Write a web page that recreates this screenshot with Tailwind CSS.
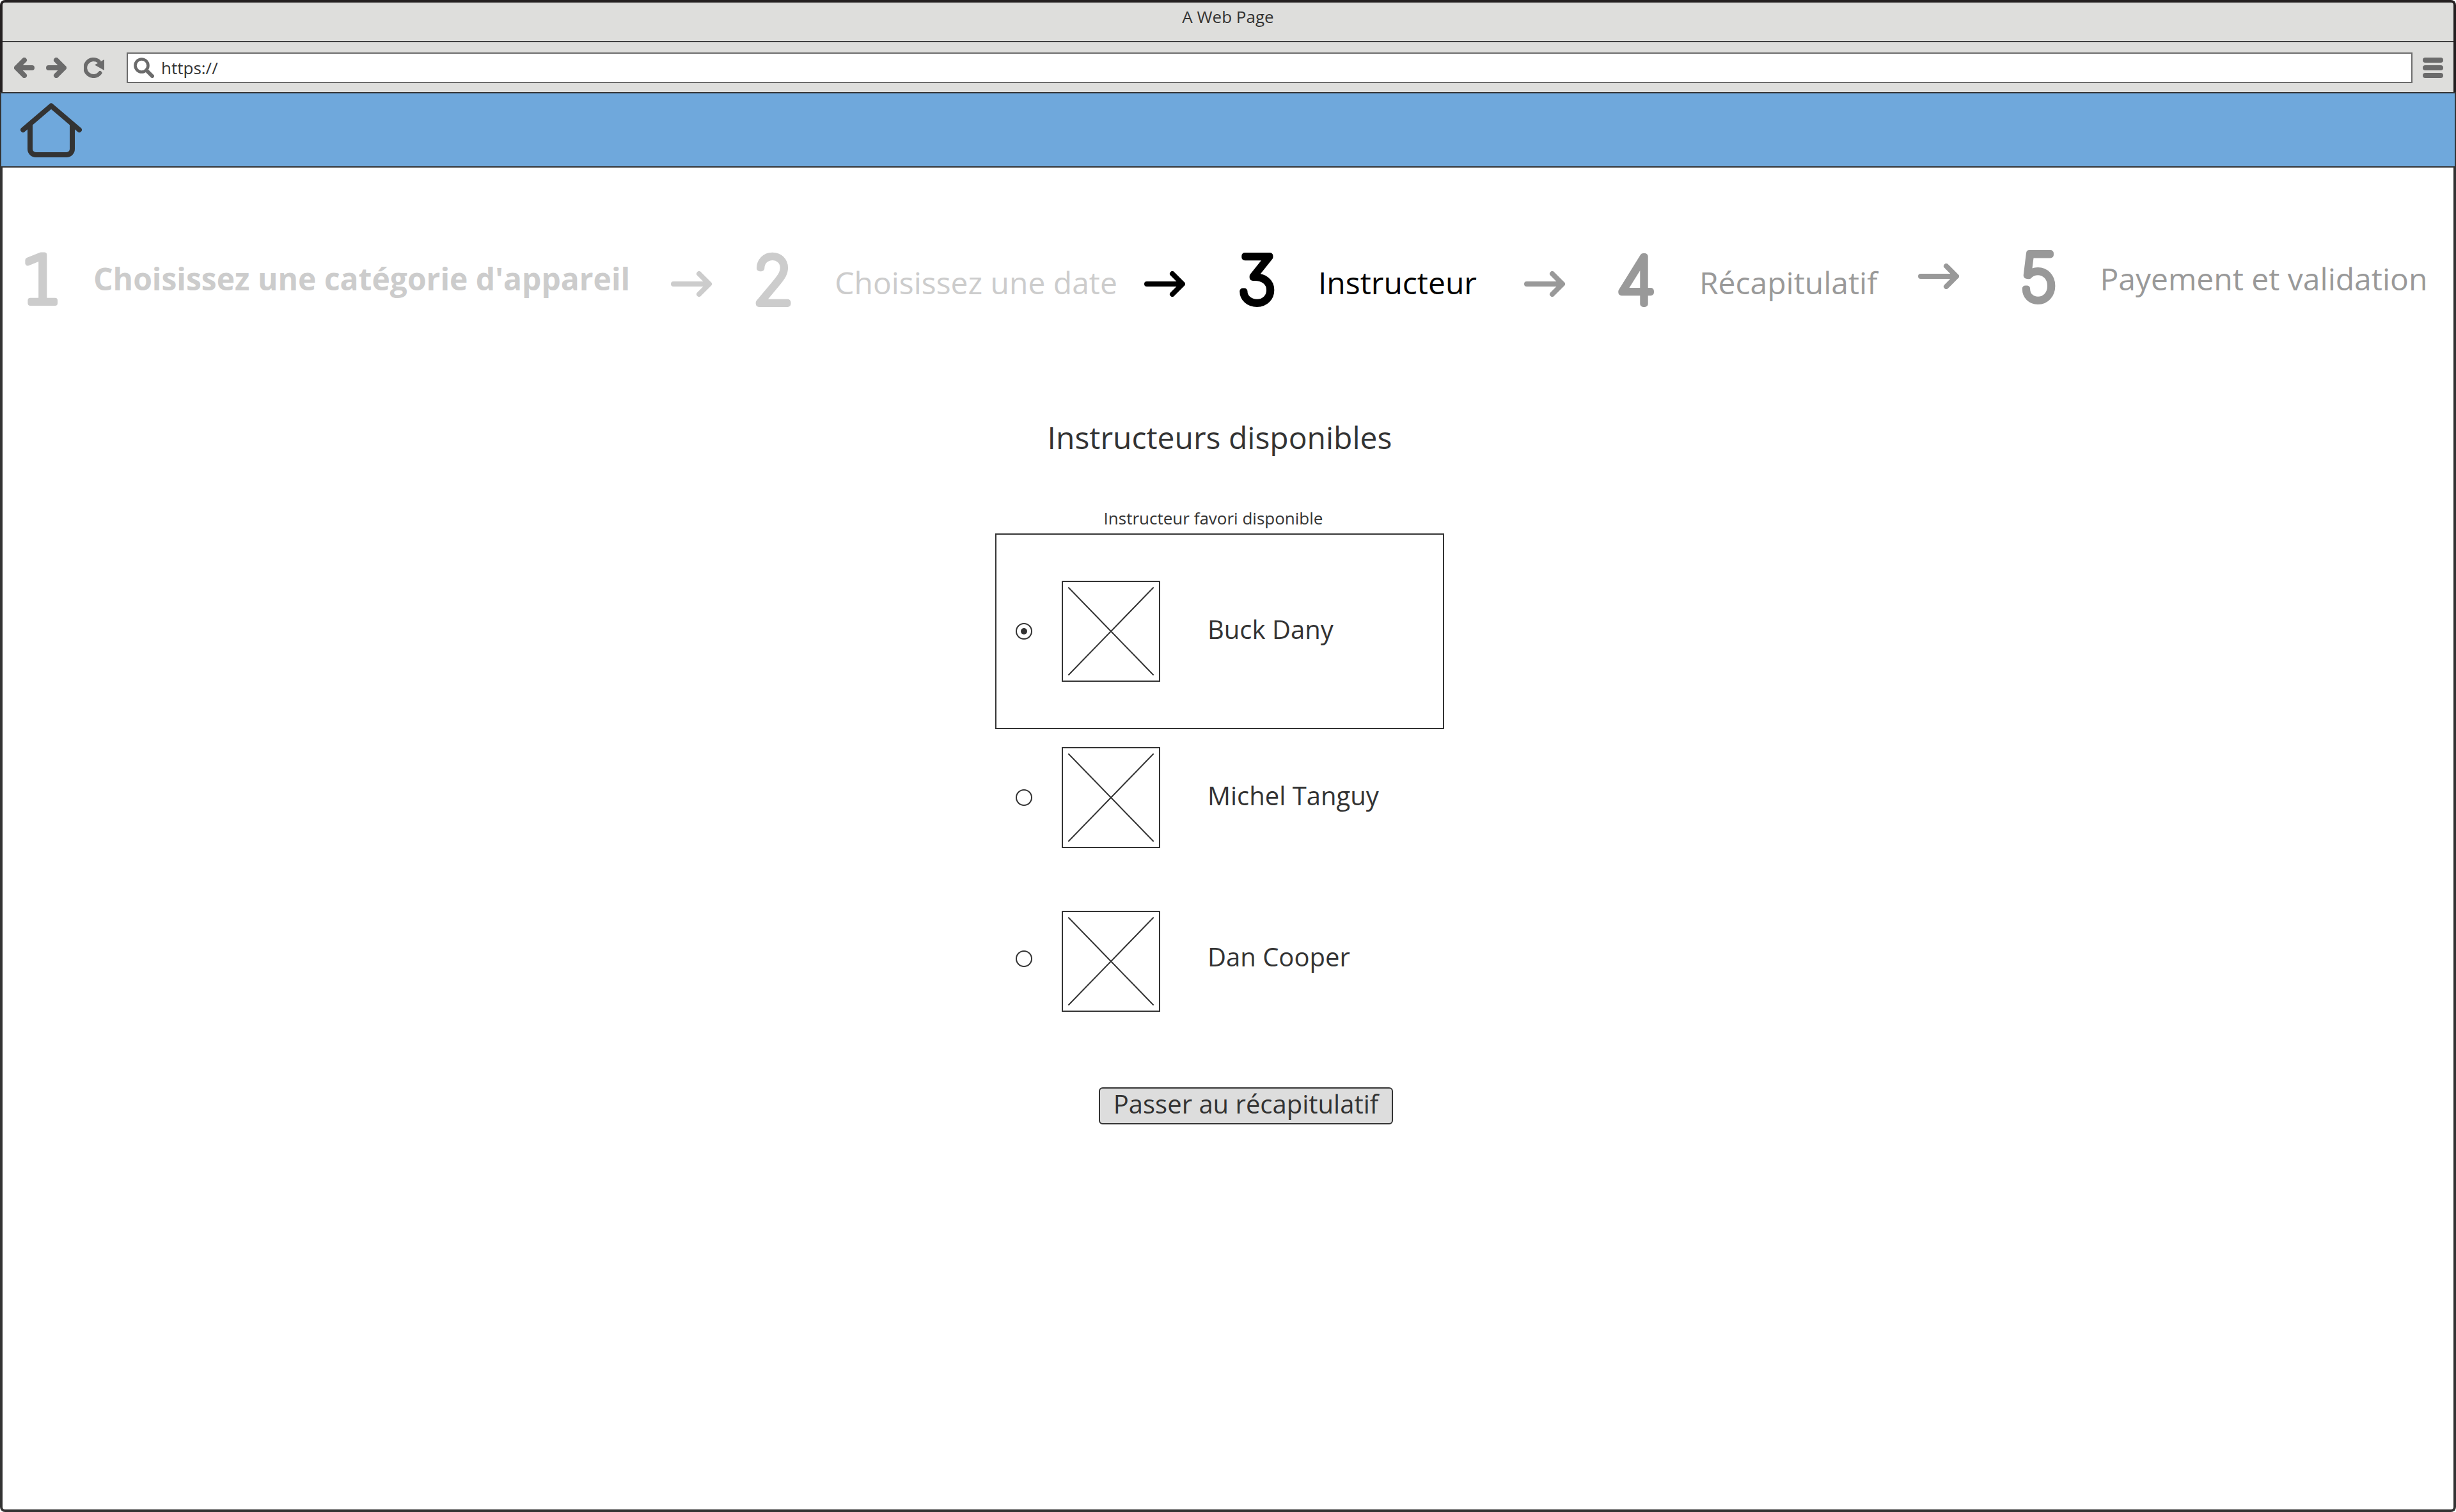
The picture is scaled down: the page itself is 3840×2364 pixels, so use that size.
<!DOCTYPE html>
<html lang="fr">
<head>
<meta charset="utf-8">
<meta name="viewport" content="width=device-width, initial-scale=1">
<title>A Web Page</title>
<script src="https://cdn.jsdelivr.net/npm/@tailwindcss/browser@4"></script>
</head>
<body class="flex min-h-screen flex-col bg-white font-['Open_Sans','Noto_Sans',sans-serif] text-[#333]">

  <!-- Browser chrome -->
  <header class="rounded-t-lg border-4 border-b-0 border-[#231f20] bg-[#dededc]">
    <div class="flex h-[62px] justify-center border-b-2 border-[#404040] pt-1">
      <p class="text-[26px] leading-9">A Web Page</p>
    </div>
    <div class="flex h-[78px] items-center pt-0.5 pr-4 pl-[18px] text-[#6b6b6b]">
      <button type="button" aria-label="Précédent" class="mr-[18px]">
        <svg class="size-8" viewBox="0 0 32 32" fill="none" stroke="currentColor" stroke-width="8" stroke-linecap="round" stroke-linejoin="round"><path d="M16 4 4 16l12 12M6 16h22"/></svg>
      </button>
      <button type="button" aria-label="Suivant" class="mr-[27px]">
        <svg class="size-8" viewBox="0 0 32 32" fill="none" stroke="currentColor" stroke-width="8" stroke-linecap="round" stroke-linejoin="round"><path d="M16 4l12 12-12 12M26 16H4"/></svg>
      </button>
      <button type="button" aria-label="Actualiser" class="mr-[35px]">
        <svg class="size-8" viewBox="0 0 32 32"><path d="M25.500 24A13 13 0 1 1 23.500 6" fill="none" stroke="currentColor" stroke-width="6" stroke-linecap="round"/><path d="M32 3v17L17 11.500z" fill="currentColor"/></svg>
      </button>
      <label class="flex h-12 min-w-0 flex-1 items-center border-2 border-[#6b6b6b] bg-white pl-[9px]">
        <svg class="size-8 shrink-0" viewBox="0 0 32 32" fill="none" stroke="currentColor" stroke-linecap="round"><circle cx="12.500" cy="12.500" r="10" stroke-width="4.600"/><path d="M20 20l9 9" stroke-width="6"/></svg>
        <input type="text" value="https://" aria-label="Adresse" class="ml-[11px] h-9 min-w-0 flex-1 bg-transparent text-[26px] leading-9 text-[#333] outline-none">
      </label>
      <button type="button" aria-label="Menu" class="ml-4">
        <svg class="size-8" viewBox="0 0 32 32" fill="currentColor"><rect width="32" height="8" rx="4"/><rect y="12" width="32" height="8" rx="4"/><rect y="24" width="32" height="8" rx="4"/></svg>
      </button>
    </div>
  </header>

  <nav class="flex h-[118px] items-center border-2 border-[#333] bg-[#6fa8dc] pt-0.5 pl-[30px]">
    <a href="#" aria-label="Accueil">
      <svg class="h-[86px] w-24" viewBox="0 0 96 86" fill="none" stroke="currentColor" stroke-width="8" stroke-linecap="round" stroke-linejoin="round"><path d="M4 42 48 4.500 92 42"/><path d="M15 34v38a9 9 0 0 0 9 9h48a9 9 0 0 0 9-9V34"/></svg>
    </a>
  </nav>

  <main class="flex flex-1 flex-col rounded-b-lg border-4 border-t-0 border-[#333] pt-[106px]">
    <!-- Booking steps -->
    <ol class="flex flex-wrap items-center pl-[26px] text-5xl leading-[64px] text-[#999]">
      <li class="mb-1 flex items-center font-bold text-[#ccc]">
        <svg class="mr-11 h-[132px] w-[72px] fill-current stroke-current stroke-8 font-['DejaVu_Sans',sans-serif] text-[104px] font-extralight [stroke-linejoin:round]" viewBox="0 0 72 132"><text x="35" y="104" text-anchor="middle">1</text></svg>
        Choisissez une catégorie d'appareil
      </li>
      <li class="mt-3 mr-15 ml-16 text-[#ccc]" aria-hidden="true">
        <svg class="h-10 w-16" viewBox="0 0 64 40" fill="none" stroke="currentColor" stroke-width="8" stroke-linecap="round" stroke-linejoin="round"><path d="M4 20h54M44 4l16 16-16 16"/></svg>
      </li>
      <li class="flex items-center text-[#ccc]">
        <svg class="mr-15 h-[132px] w-[72px] fill-current stroke-current stroke-10 font-['Inter',sans-serif] text-[102px] font-thin [stroke-linejoin:round]" viewBox="0 0 72 132"><text x="36" y="103" text-anchor="middle">2</text></svg>
        <span class="pt-2">Choisissez une date</span>
      </li>
      <li class="mt-3 mr-[76px] ml-[42px] text-black" aria-hidden="true">
        <svg class="h-10 w-16" viewBox="0 0 64 40" fill="none" stroke="currentColor" stroke-width="8" stroke-linecap="round" stroke-linejoin="round"><path d="M4 20h54M44 4l16 16-16 16"/></svg>
      </li>
      <li class="flex items-center text-black" aria-current="step">
        <svg class="mr-15 h-[132px] w-[72px] fill-current stroke-current stroke-10 font-['Inter',sans-serif] text-[102px] font-thin [font-feature-settings:'cv09'] [stroke-linejoin:round]" viewBox="0 0 72 132"><text x="36" y="102" text-anchor="middle">3</text></svg>
        <span class="pt-2">Instructeur</span>
      </li>
      <li class="mx-[74px] mt-3" aria-hidden="true">
        <svg class="h-10 w-16" viewBox="0 0 64 40" fill="none" stroke="currentColor" stroke-width="8" stroke-linecap="round" stroke-linejoin="round"><path d="M4 20h54M44 4l16 16-16 16"/></svg>
      </li>
      <li class="flex items-center">
        <svg class="mr-16 h-[132px] w-[72px] fill-current stroke-current stroke-10 font-['Inter',sans-serif] text-[102px] font-thin [stroke-linejoin:round]" viewBox="0 0 72 132"><text x="37" y="103" text-anchor="middle">4</text></svg>
        <span class="pt-2">Récapitulatif</span>
      </li>
      <li class="mb-3 mr-[88px] ml-16" aria-hidden="true">
        <svg class="h-10 w-16" viewBox="0 0 64 40" fill="none" stroke="currentColor" stroke-width="8" stroke-linecap="round" stroke-linejoin="round"><path d="M4 20h54M44 4l16 16-16 16"/></svg>
      </li>
      <li class="mb-2 flex items-center">
        <svg class="mr-15 h-[132px] w-[72px] fill-current stroke-current stroke-10 font-['Inter',sans-serif] text-[102px] font-thin [stroke-linejoin:round]" viewBox="0 0 72 132"><text x="36" y="102" text-anchor="middle">5</text></svg>
        <span class="pt-1">Payement et validation</span>
      </li>
    </ol>

    <!-- Instructor choice -->
    <form class="mt-36 flex flex-col items-center pr-[26px]">
      <h1 class="text-5xl leading-[64px]">Instructeurs disponibles</h1>
      <fieldset class="mt-[76px] w-full max-w-[702px]">
        <legend class="w-full pr-5 pb-1.5 text-center text-[26px] leading-9">Instructeur favori disponible</legend>
        <label class="flex h-[306px] items-center border-2 border-[#333] pl-[30px] text-[40px] leading-[56px]">
          <input type="radio" name="instructeur" checked class="grid size-[26px] appearance-none place-content-center rounded-full border-2 border-[#333] before:size-2.5 before:rounded-full checked:before:bg-[#333]">
          <svg class="mr-[74px] ml-[46px] h-[158px] w-[154px] shrink-0 border-2 border-[#333]" viewBox="2 2 150 154" stroke="currentColor" stroke-width="2" stroke-linecap="round"><path d="M11 11l132 136M143 11 11 147"/></svg>
          <span class="pb-1.5">Buck Dany</span>
        </label>
        <label class="mt-7 flex items-center pl-8 text-[40px] leading-[56px]">
          <input type="radio" name="instructeur" class="grid size-[26px] appearance-none place-content-center rounded-full border-2 border-[#333] before:size-2.5 before:rounded-full checked:before:bg-[#333]">
          <svg class="mr-[74px] ml-[46px] h-[158px] w-[154px] shrink-0 border-2 border-[#333]" viewBox="2 2 150 154" stroke="currentColor" stroke-width="2" stroke-linecap="round"><path d="M11 11l132 136M143 11 11 147"/></svg>
          <span class="pb-1.5">Michel Tanguy</span>
        </label>
        <label class="mt-[90px] flex items-center pl-8 text-[40px] leading-[56px]">
          <input type="radio" name="instructeur" class="grid size-[26px] appearance-none place-content-center rounded-full border-2 border-[#333] before:size-2.5 before:rounded-full checked:before:bg-[#333]">
          <svg class="mt-2 mr-[74px] ml-[46px] h-[158px] w-[154px] shrink-0 border-2 border-[#333]" viewBox="2 2 150 154" stroke="currentColor" stroke-width="2" stroke-linecap="round"><path d="M11 11l132 136M143 11 11 147"/></svg>
          <span class="pb-1.5">Dan Cooper</span>
        </label>
      </fieldset>
      <button type="submit" class="mt-[118px] ml-[82px] h-[58px] rounded-md border-2 border-[#333] bg-[#ddd] px-[21px] pb-1.5 text-[40px] leading-[48px]">Passer au récapitulatif</button>
    </form>
  </main>
</body>
</html>
